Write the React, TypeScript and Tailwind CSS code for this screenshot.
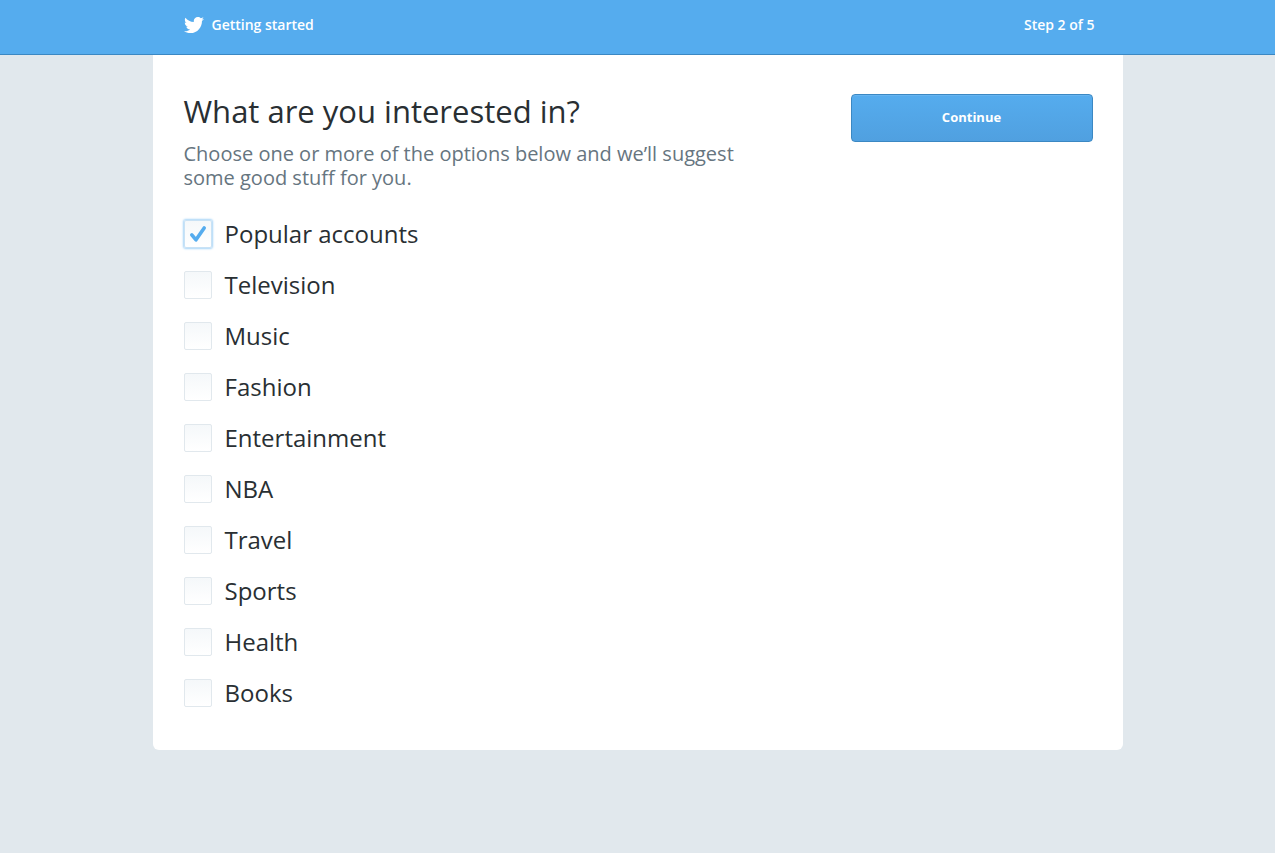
import { useState } from "react";
import { FaTwitter } from "react-icons/fa";

const topics = ["Popular accounts", "Television", "Music", "Fashion", "Entertainment", "NBA", "Travel", "Sports", "Health", "Books"];

function Topic({ name, checked, onToggle }: { name: string; checked: boolean; onToggle: () => void }) {
  return (
    <li>
      <label className="flex items-center gap-[13px] h-[51px] text-2xl text-[#292f33] cursor-pointer">
        <span className="grid size-7 shrink-0">
          <input
            type="checkbox"
            checked={checked}
            onChange={onToggle}
            className="peer col-start-1 row-start-1 appearance-none size-7 rounded-xs border border-[#e1e8ed] bg-linear-to-b from-[#f5f8fa] to-white checked:border-[#c9e2f5] checked:shadow-[0_0_2px_1px_#a9d5f7]"
          />
          <svg viewBox="0 0 18 18" className="hidden peer-checked:block col-start-1 row-start-1 place-self-center size-[18px] pointer-events-none" fill="none" stroke="#55acee" strokeWidth="3.6" strokeLinecap="round" strokeLinejoin="round">
            <path d="M2.8 9.8 7 14.8 15.2 3" />
          </svg>
        </span>
        {name}
      </label>
    </li>
  );
}

export default function App() {
  const [selected, setSelected] = useState<string[]>(["Popular accounts"]);

  const toggle = (name: string) =>
    setSelected((prev) => (prev.includes(name) ? prev.filter((n) => n !== name) : [...prev, name]));

  return (
    <div className="min-h-screen bg-[#e1e8ed] font-['Open_Sans',sans-serif]">
      <header className="bg-[#55acee] border-b border-[#3b88c3]">
        <div className="max-w-[970px] mx-auto h-[54px] pl-[31px] pr-7 pb-1 flex items-center justify-between text-white text-sm font-semibold">
          <div className="flex items-center gap-2"><FaTwitter className="size-5" />Getting started</div>
          <span>Step 2 of 5</span>
        </div>
      </header>
      <main className="max-w-[970px] mx-auto bg-white rounded-b-md pl-[31px] pr-[30px] pt-9 pb-8">
        <div className="flex items-start justify-between gap-8">
          <div className="max-w-[570px]">
            <h1 className="text-[31px] leading-10 text-[#292f33]">What are you interested in?</h1>
            <p className="mt-[11px] text-xl leading-6 text-[#66757f]">Choose one or more of the options below and we’ll suggest some good stuff for you.</p>
          </div>
          <button type="button" className="mt-[3px] w-[242px] h-12 rounded-sm border border-[#3b88c3] bg-linear-to-b from-[#55acee] to-[#50a0e0] shadow-[inset_0_1px_0_#66b4f0] text-[13px] font-bold text-white">Continue</button>
        </div>
        <ul className="mt-[18px]">
          {topics.map((name) => (
            <Topic key={name} name={name} checked={selected.includes(name)} onToggle={() => toggle(name)} />
          ))}
        </ul>
      </main>
    </div>
  );
}
